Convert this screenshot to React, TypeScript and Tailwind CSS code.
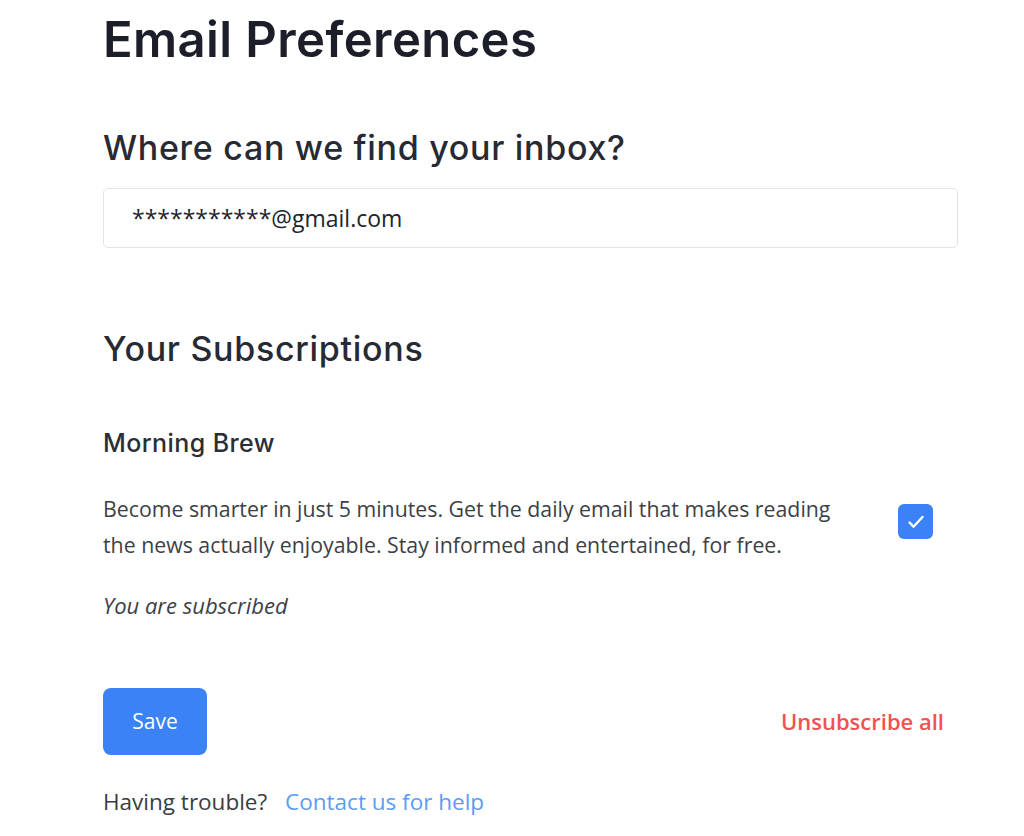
import { useState } from 'react';

export default function App() {
  const [subscribed, setSubscribed] = useState(true);

  return (
    <div className="min-h-[836px] bg-white" style={{ fontFamily: '"Open Sans", "Noto Sans", sans-serif' }}>
      <div className="ml-[103px] w-[855px] pt-[12px]">
        {/* Title */}
        <h1 className="text-[49px] leading-[56px] font-semibold text-[#1c1f2a] tracking-[0.4px]" style={{ fontFamily: 'Inter, sans-serif' }}>
          Email Preferences
        </h1>

        {/* Inbox */}
        <h2 className="mt-[60px] text-[34px] leading-[40px] font-medium text-[#272a33] tracking-[0.7px]" style={{ fontFamily: 'Inter, sans-serif' }}>
          Where can we find your inbox?
        </h2>
        <div className="mt-[20px] h-[60px] flex items-center border border-[#e2e4ea] rounded-[5px] pl-[28px] text-[23px] text-[#22242b]">
          ***********@gmail.com
        </div>

        {/* Subscriptions */}
        <h2 className="mt-[81px] text-[34px] leading-[40px] font-medium text-[#272a33] tracking-[0.7px]" style={{ fontFamily: 'Inter, sans-serif' }}>
          Your Subscriptions
        </h2>

        <h3 className="mt-[59px] text-[25px] leading-[30px] font-medium text-[#2b2e36] tracking-[0.4px]" style={{ fontFamily: 'Inter, sans-serif' }}>
          Morning Brew
        </h3>

        <div className="mt-[33px] flex items-start justify-between pr-[25px]">
          <p className="w-[750px] text-[21.3px] leading-[36px] text-[#3d3f47]">
            Become smarter in just 5 minutes. Get the daily email that makes reading the news actually enjoyable. Stay informed and entertained, for free.
          </p>
          <button
            onClick={() => setSubscribed(!subscribed)}
            className={`mt-[13px] w-[35px] h-[35px] shrink-0 rounded-[6px] flex items-center justify-center ${subscribed ? 'bg-[#3b82f6]' : 'border border-gray-300 bg-white'}`}
          >
            {subscribed && (
              <svg width="24" height="24" viewBox="0 0 24 24" fill="none">
                <path d="M5.5 12.5l4 4.2L18.5 7" stroke="white" strokeWidth="2.4" strokeLinecap="round" strokeLinejoin="round" />
              </svg>
            )}
          </button>
        </div>

        <p className="mt-[27px] text-[22px] leading-[30px] italic text-[#3d3f47]">
          You are subscribed
        </p>

        {/* Actions */}
        <div className="mt-[68px] flex items-center justify-between pr-[14px]">
          <button className="w-[104px] h-[67px] rounded-[8px] bg-[#3b82f6] text-white text-[21px]">
            Save
          </button>
          <button className="text-[22px] font-semibold text-[#f05252]">
            Unsubscribe all
          </button>
        </div>

        <p className="mt-[32px] text-[22.5px] leading-[30px] text-[#3a3c44]">
          Having trouble?{' '}
          <a href="#" className="ml-[12px] text-[#5b9cf4]">Contact us for help</a>
        </p>
      </div>
    </div>
  );
}
